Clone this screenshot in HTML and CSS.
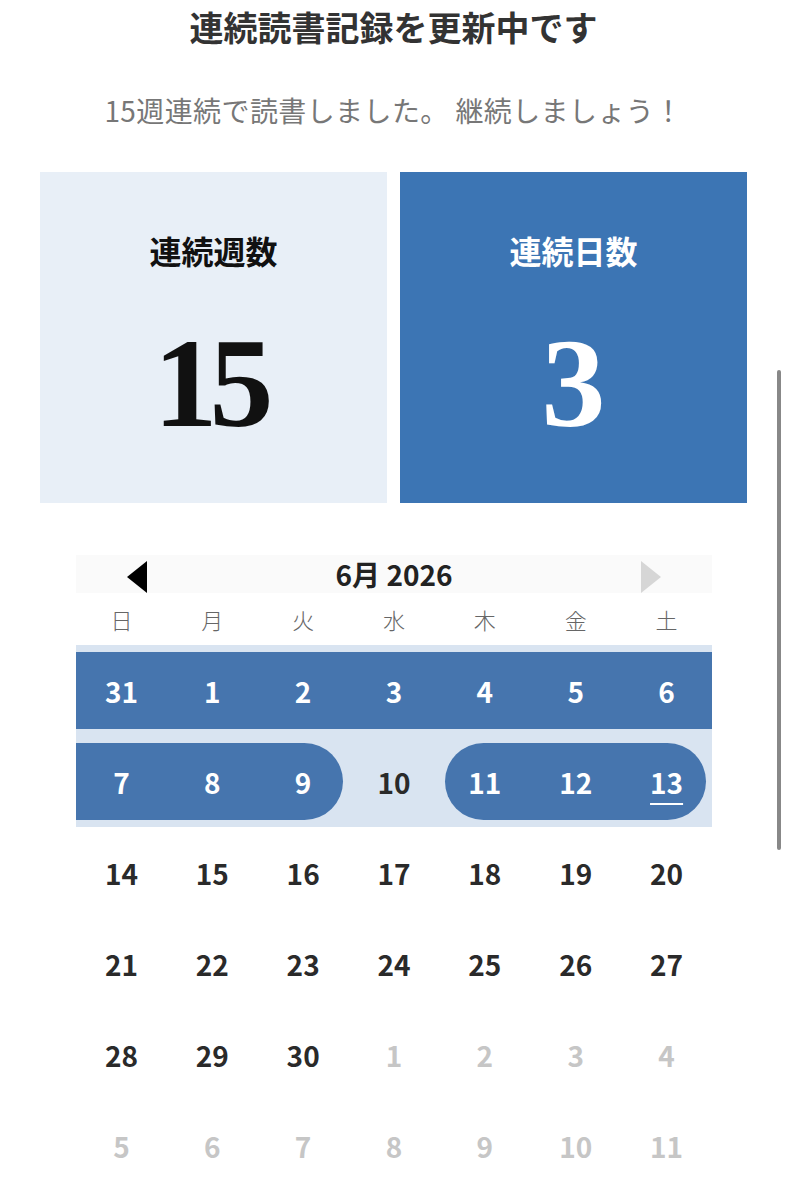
FILE: index.html
```html
<!DOCTYPE html>
<html lang="ja">
<head>
    <meta charset="UTF-8">
    <meta name="viewport" content="width=device-width, initial-scale=1.0">
    <title>連続読書記録</title>
    <link rel="stylesheet" href="styles.css">
</head>
<body>

<!-- Streak summary -->
<div class="page">
    <h1 class="title">連続読書記録を更新中です</h1>
    <p class="subtitle">15週連続で読書しました。 継続しましょう！</p>

    <div class="cards">
        <div class="card card-light">
            <div class="card-label">連続週数</div>
            <div class="card-number">15</div>
        </div>
        <div class="card card-blue">
            <div class="card-label">連続日数</div>
            <div class="card-number">3</div>
        </div>
    </div>

    <!-- Calendar -->
    <div class="calendar">
        <div class="cal-header">
            <span class="arrow arrow-prev"></span>
            <span class="cal-month">6月 2026</span>
            <span class="arrow arrow-next"></span>
        </div>

        <div class="weekdays">
            <span>日</span><span>月</span><span>火</span><span>水</span><span>木</span><span>金</span><span>土</span>
        </div>

        <div class="week streak">
            <div class="day on"><span class="fill">31</span></div>
            <div class="day on"><span class="fill">1</span></div>
            <div class="day on"><span class="fill">2</span></div>
            <div class="day on"><span class="fill">3</span></div>
            <div class="day on"><span class="fill">4</span></div>
            <div class="day on"><span class="fill">5</span></div>
            <div class="day on"><span class="fill">6</span></div>
        </div>
        <div class="week streak">
            <div class="day on"><span class="fill">7</span></div>
            <div class="day on"><span class="fill">8</span></div>
            <div class="day on end"><span class="fill">9</span></div>
            <div class="day"><span class="fill">10</span></div>
            <div class="day on start"><span class="fill">11</span></div>
            <div class="day on"><span class="fill">12</span></div>
            <div class="day on end"><span class="fill"><span class="today">13</span></span></div>
        </div>
        <div class="week">
            <div class="day"><span class="fill">14</span></div>
            <div class="day"><span class="fill">15</span></div>
            <div class="day"><span class="fill">16</span></div>
            <div class="day"><span class="fill">17</span></div>
            <div class="day"><span class="fill">18</span></div>
            <div class="day"><span class="fill">19</span></div>
            <div class="day"><span class="fill">20</span></div>
        </div>
        <div class="week">
            <div class="day"><span class="fill">21</span></div>
            <div class="day"><span class="fill">22</span></div>
            <div class="day"><span class="fill">23</span></div>
            <div class="day"><span class="fill">24</span></div>
            <div class="day"><span class="fill">25</span></div>
            <div class="day"><span class="fill">26</span></div>
            <div class="day"><span class="fill">27</span></div>
        </div>
        <div class="week">
            <div class="day"><span class="fill">28</span></div>
            <div class="day"><span class="fill">29</span></div>
            <div class="day"><span class="fill">30</span></div>
            <div class="day other"><span class="fill">1</span></div>
            <div class="day other"><span class="fill">2</span></div>
            <div class="day other"><span class="fill">3</span></div>
            <div class="day other"><span class="fill">4</span></div>
        </div>
        <div class="week">
            <div class="day other"><span class="fill">5</span></div>
            <div class="day other"><span class="fill">6</span></div>
            <div class="day other"><span class="fill">7</span></div>
            <div class="day other"><span class="fill">8</span></div>
            <div class="day other"><span class="fill">9</span></div>
            <div class="day other"><span class="fill">10</span></div>
            <div class="day other"><span class="fill">11</span></div>
        </div>
    </div>
</div>

<div class="scrollbar"></div>

</body>
</html>
```

FILE: styles.css
```css
body {
    margin: 0;
    background-color: white;
    font-family: "Noto Sans CJK JP", "Noto Sans", sans-serif;
    color: #333;
}

.page {
    padding: 0 41px 0 40px;
}

.title {
    margin: 0;
    font-size: 34px;
    line-height: 54px;
    font-weight: bold;
    text-align: center;
    color: #333;
}

.subtitle {
    margin: 36px 0 0 0;
    font-size: 28px;
    line-height: 40px;
    text-align: center;
    color: #777;
    letter-spacing: 0.4px;
}

/* Summary cards */
.cards {
    display: grid;
    grid-template-columns: 1fr 1fr;
    gap: 13px;
    margin-top: 42px;
}

.card {
    height: 331px;
    display: flex;
    flex-direction: column;
    align-items: center;
}

.card-light {
    background-color: #e8eff7;
    color: #111;
}

.card-blue {
    background-color: #3c75b4;
    color: white;
}

.card-label {
    margin-top: 58px;
    font-size: 32px;
    line-height: 40px;
    font-weight: bold;
}

.card-number {
    margin-top: 38px;
    font-family: "Liberation Serif", "Times New Roman", serif;
    font-weight: bold;
    font-size: 128px;
    line-height: 150px;
    letter-spacing: -8px;
    text-indent: -8px;
}

/* Calendar */
.calendar {
    margin: 52px 35px 0 36px;
}

.cal-header {
    height: 38px;
    background-color: #fafafa;
    display: flex;
    align-items: flex-end;
    justify-content: space-between;
    padding: 0 51px 0 51px;
}

.cal-month {
    align-self: center;
    font-size: 28px;
    font-weight: bold;
    color: #222;
    line-height: 38px;
}

.arrow {
    width: 0;
    height: 0;
    border-top: 16px solid transparent;
    border-bottom: 16px solid transparent;
}

.arrow-prev {
    border-right: 20px solid #000;
}

.arrow-next {
    border-left: 20px solid #d6d6d6;
}

.weekdays {
    display: grid;
    grid-template-columns: repeat(7, 1fr);
    height: 52px;
    align-items: center;
    text-align: center;
    font-size: 22px;
    font-weight: 300;
    color: #666;
}

.week {
    display: grid;
    grid-template-columns: repeat(7, 1fr);
    height: 91px;
}

.week.streak {
    background-color: #d9e4f1;
}

.day {
    padding: 7px 0;
    display: flex;
}

.fill {
    flex: 1;
    display: flex;
    align-items: center;
    justify-content: center;
    font-size: 28px;
    font-weight: bold;
    color: #2a2a2a;
}

.day.on .fill {
    background-color: #4675ae;
    color: white;
}

.day.start .fill {
    margin-left: 6px;
    padding-right: 6px;
    border-radius: 39px 0 0 39px;
}

.day.end .fill {
    margin-right: 6px;
    padding-left: 6px;
    border-radius: 0 39px 39px 0;
}

.day.other .fill {
    color: #c6c6c6;
}

.today {
    text-decoration: underline;
    text-decoration-thickness: 2px;
    text-underline-offset: 9px;
}

/* Overlay scrollbar */
.scrollbar {
    position: fixed;
    top: 370px;
    left: 777px;
    width: 4px;
    height: 480px;
    border-radius: 2px;
    background-color: #888;
}
```
